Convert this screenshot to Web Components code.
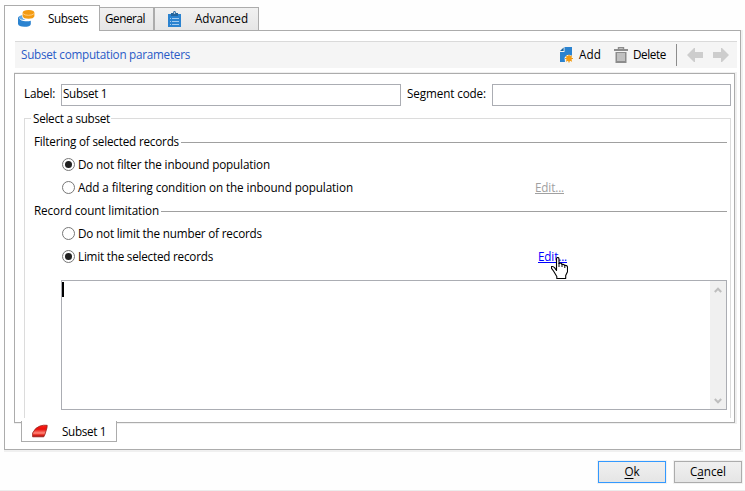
<!DOCTYPE html>
<html lang="en"><head><meta charset="utf-8"><title>Subsets</title>
<style>html,body{margin:0;background:#fefefe;width:745px;height:491px;overflow:hidden}</style></head><body><subset-dialog></subset-dialog>
<script>
const base='*{box-sizing:border-box}:host{box-sizing:border-box}svg{display:block;flex:none}';
function define(name,css,html,ready){
 customElements.define(name,class extends HTMLElement{
  constructor(){super();this.attachShadow({mode:'open'}).innerHTML='<style>'+base+css+'</style>'+html}
  connectedCallback(){if(ready)ready.call(this,this.shadowRoot)}
 });
}
// Label whose tracking is adjusted so that it takes the width given in "w".
define('ui-text',':host{display:inline-block;flex:none;white-space:pre;line-height:16px;height:16px}:host([link]) span{text-decoration:underline;text-decoration-thickness:1px;text-underline-offset:1px}span{display:inline-block}::slotted(u){text-underline-offset:2px}','<span><slot></slot></span>',function(r){
 const w=+this.getAttribute('w'),s=r.querySelector('span'),n=this.textContent.length;
 this.style.width=w+'px';
 s.style.letterSpacing=((w-s.getBoundingClientRect().width)/n)+'px';
});
const art={
 db:[17,17,'<path fill="#2b83d0" d="M0 8.2q0-1.2 1-1.7 0 3.8 4.5 4.5 4 .8 7.3-.2v3.4q-.8 2.6-6.4 2.6T0 14z"/><path fill="#66a9e2" d="M1 6.2 4.2 5v2q.3 2 3.3 3-5 .5-6.5-2.3z"/><path fill="#f39b13" d="M4.6 2.8Q5 .2 10.5.1t5.9 2.7v3.4Q15.6 8.7 10.5 8.7T4.6 6.2z"/><path fill="none" stroke="#ffcf85" stroke-width=".9" d="M5 3.6q1.5 1.7 5.5 1.7T16 3.6"/>'],
 clip:[13,16,'<path fill="#2b83d0" d="M0 3h13v13H0z"/><path fill="#24649c" d="M3 2h2q0-2 1.5-2T8 2h2v3H3z"/><circle cx="6.5" cy="2" r=".8" fill="#fff"/><path stroke="#d7ebff" d="M4 7.5h7M4 10.5h7M4 13.5h7M2 7.5h1M2 10.5h1M2 13.5h1" opacity=".7"/>'],
 add:[14,16,'<path fill="#2b83d0" d="M4.5 0H12v9.5H8L5 12v3H0V5h4.5z"/><path fill="#17639f" d="M3.6.4V4H0z"/><path fill="#f5f5f5" d="M4.6 10.5 7 8l5 .5V16H5z"/><path stroke="#f39b13" stroke-width="1.2" d="M9 7.5v8M5 11.5h8M6.2 8.7l5.6 5.6M6.2 14.3l5.6-5.6"/><circle cx="9" cy="11.5" r="2.8" fill="#f39b13"/>'],
 trash:[14,16,'<path fill="none" stroke="#8c8c8c" stroke-width="1.4" d="M4.5 2.5V.8h5v1.7"/><path fill="#8c8c8c" d="M0 2h14v2H0zM1.5 5h11v11h-11z"/><path fill="none" stroke="#f5f5f5" d="M4 6v8M6 6v8M8 6v8M10 6v8"/>'],
 left:[16,14,'<path fill="#cdcdcd" d="M0 7 7 0h1v4h8v6H8v4H7z"/>'],
 right:[16,14,'<path fill="#cdcdcd" d="m16 7-7-7H8v4H0v6h8v4h1z"/>'],
 red:[16,14,'<defs><linearGradient id="g" x2="0" y2="1"><stop stop-color="#ff2018"/><stop offset=".35" stop-color="#e80e0a"/><stop offset=".68" stop-color="#ff8a7c"/><stop offset=".8" stop-color="#ef3b30"/><stop offset="1" stop-color="#9c0000"/></linearGradient></defs><path d="M.6 12.8V9Q3.3 3.3 8 2 11.5.8 15.2 1.3 15.4 3.2 14 7q-.8 3.4-2.2 5.8z" fill="url(#g)" stroke="#992019" stroke-width=".8"/>'],
 up:[8,6,'<path fill="none" stroke="#bebebe" stroke-width="2" d="m.8 5 3.2-3.3L7.2 5"/>'],
 down:[8,6,'<path fill="none" stroke="#bebebe" stroke-width="2" d="m.8 1 3.2 3.3L7.2 1"/>'],
 hand:[17,22,'<path fill="#fff" stroke="#000" stroke-width="1.1" stroke-linejoin="round" d="M5.5 13.5V2q0-1.5 1.2-1.5T8 2v4.5q2.8-.8 3 1 2.2-.6 2.7 1 2.8-.5 2.8 2v4.2l-1.8 3.8v3H5.8v-2L2.5 14 .5 11.3V9.6q2-.5 3.2 1.3z"/><path stroke="#000" d="M8 6v4M11 7v3M13.8 8.5V11"/>']
};
define('ui-icon',':host{display:block;flex:none}','',function(r){const a=art[this.getAttribute('name')];r.innerHTML+=`<svg width="${a[0]}" height="${a[1]}" viewBox="0 0 ${a[0]} ${a[1]}">${a[2]}</svg>`});
define('ui-tab',`:host{display:flex;align-items:center;height:23px;border:1px solid #acacac;border-bottom:0;background:linear-gradient(#f1f1f1,#e6e6e6)}
:host([active]){height:26px;background:#fff;margin-bottom:-1px;padding-bottom:1px}:host(:not([active]):not([bottom])) ::slotted(ui-text){margin-bottom:2px}:host([bottom]){border:1px solid #acacac;border-top:0;background:#fff;height:21px;width:96px;padding:0 0 0 10px;gap:14px}`,'<slot></slot>');
define('ui-toolbar',':host{display:flex;align-items:center;height:27px;border-top:1px solid #dadada;background:#f5f5f5;padding-left:6px}::slotted(ui-text){color:#2a5bc7;margin:0 370px 2px 0}ui-text{margin-bottom:2px}i{flex:none;width:1px;height:22px;background:#8c8c8c;margin:0 10px}',
`<slot></slot><ui-icon name="add" style="margin-right:5px"></ui-icon><ui-text w="22" style="margin-right:13px">Add</ui-text><ui-icon name="trash" style="margin-right:5px"></ui-icon><ui-text w="33">Delete</ui-text><i></i><ui-icon name="left" style="margin-right:10px"></ui-icon><ui-icon name="right"></ui-icon>`);
define('ui-field',':host{display:flex;align-items:center;height:22px;border:1px solid #abadb3;background:#fff;padding:0 1px 4px}','<slot></slot>');
define('ui-section',':host{display:flex;align-items:center;height:23px;padding:0 3px 0 9px;gap:2px}::slotted(ui-text){margin-bottom:1px}i{flex:1;height:1px;margin-top:2px;background:#a0a0a0}','<slot></slot><i></i>');
define('ui-radio',`:host{display:flex;align-items:center;height:23px;padding-left:37px}::slotted(*){margin-bottom:1px}i{width:13px;height:13px;flex:none;border:1px solid #777;border-radius:50%;background:#fff;display:flex;align-items:center;justify-content:center;margin-right:3px}
:host([checked]) i:after{content:"";width:7px;height:7px;border-radius:50%;background:#222}`,'<i></i><slot></slot>');
define('ui-link',':host{display:block;height:16px;color:#00f;position:relative}:host([disabled]){color:#a0a0a0}::slotted(ui-icon){position:absolute;left:13px;top:9px}','<ui-text link w="29">Edit...</ui-text><slot></slot>');
define('ui-memo',`:host{display:flex;justify-content:space-between;height:130px;border:1px solid #abadb3;background:#fff}
b{width:2px;height:15px;background:#000;margin-top:1px}div{width:16px;background:#f0f0f0;display:flex;flex-direction:column;align-items:center;justify-content:space-between;padding:6px 0 5px}`,'<b></b><div><ui-icon name="up"></ui-icon><ui-icon name="down"></ui-icon></div>');
define('ui-group',`:host{display:block;width:707px;height:300px;border:1px solid #dcdcdc;border-bottom:0}header{display:flex;align-items:center;height:23px;width:max-content;background:#fff;margin:-12px 0 0 6px;padding:0 1px 1px 2px}`,'<header><slot name="legend"></slot></header><slot></slot>');
define('ui-button',`:host{display:flex;align-items:center;justify-content:center;width:68px;height:22px;padding-bottom:2px;border:1px solid #acacac;background:linear-gradient(#f0f0f0,#e5e5e5);box-shadow:0 0 0 1px #f2f2f2}:host([primary]){border-color:#3399ff}`,'<slot></slot>');
define('subset-dialog',`:host{display:flex;flex-direction:column;width:745px;height:491px;padding:5px 3px 0 4px;border-bottom:1px solid #ececec;font:11.7px "Open Sans","Noto Sans",sans-serif;color:#000}
nav{display:flex;align-items:flex-end;height:25px;position:relative}
main{width:737px;height:420px;border:1px solid #acacac;background:#fff;padding:10px 4px 0 9px;box-shadow:1px 1px 0 1px #f0f0f0}
ui-toolbar{width:722px;margin-left:1px}
article{width:721px;height:350px;margin-top:5px;border:1px solid #acacac;background:#fff;box-shadow:1px 0 0 1px #f0f0f0;padding:10px 0 0 9px}
.fields{display:flex;align-items:center;margin-bottom:12px}
footer{display:flex;justify-content:flex-end;gap:8px;margin-top:11px}`,
`<nav><ui-tab active style="width:96px;padding-left:13px"><ui-icon name="db"></ui-icon><ui-text w="40" style="margin-left:13px">Subsets</ui-text></ui-tab><ui-tab style="width:54px;padding-left:5px;border-left:0"><ui-text w="40">General</ui-text></ui-tab><ui-tab style="width:105px;padding-left:13px"><ui-icon name="clip"></ui-icon><ui-text w="53" style="margin-left:14px">Advanced</ui-text></ui-tab></nav>
<main><ui-toolbar><ui-text w="169">Subset computation parameters</ui-text></ui-toolbar>
<article><div class="fields"><ui-text w="31" style="margin:0 6px 4px 0">Label:</ui-text><ui-field style="width:340px"><ui-text w="44">Subset 1</ui-text></ui-field><ui-text w="79" style="margin:0 6px 4px">Segment code:</ui-text><ui-field style="width:239px"></ui-field></div>
<ui-group><ui-text w="77" slot="legend">Select a subset</ui-text>
<ui-section><ui-text w="145">Filtering of selected records</ui-text></ui-section>
<ui-radio checked><ui-text w="192">Do not filter the inbound population</ui-text></ui-radio>
<ui-radio><ui-text w="275">Add a filtering condition on the inbound population</ui-text><ui-link disabled style="margin-left:182px"></ui-link></ui-radio>
<ui-section><ui-text w="125">Record count limitation</ui-text></ui-section>
<ui-radio><ui-text w="184">Do not limit the number of records</ui-text></ui-radio>
<ui-radio checked><ui-text w="135">Limit the selected records</ui-text><ui-link style="margin-left:325px"><ui-icon name="hand"></ui-icon></ui-link></ui-radio>
<ui-memo style="margin:12px 3px 0 36px"></ui-memo></ui-group></article>
<ui-tab bottom style="margin:-2px 0 0 7px;position:relative"><ui-icon name="red"></ui-icon><ui-text w="44">Subset 1</ui-text></ui-tab></main>
<footer><ui-button primary><ui-text w="15"><u>O</u>k</ui-text></ui-button><ui-button><ui-text w="36">C<u>a</u>ncel</ui-text></ui-button></footer>`);
</script></body></html>
